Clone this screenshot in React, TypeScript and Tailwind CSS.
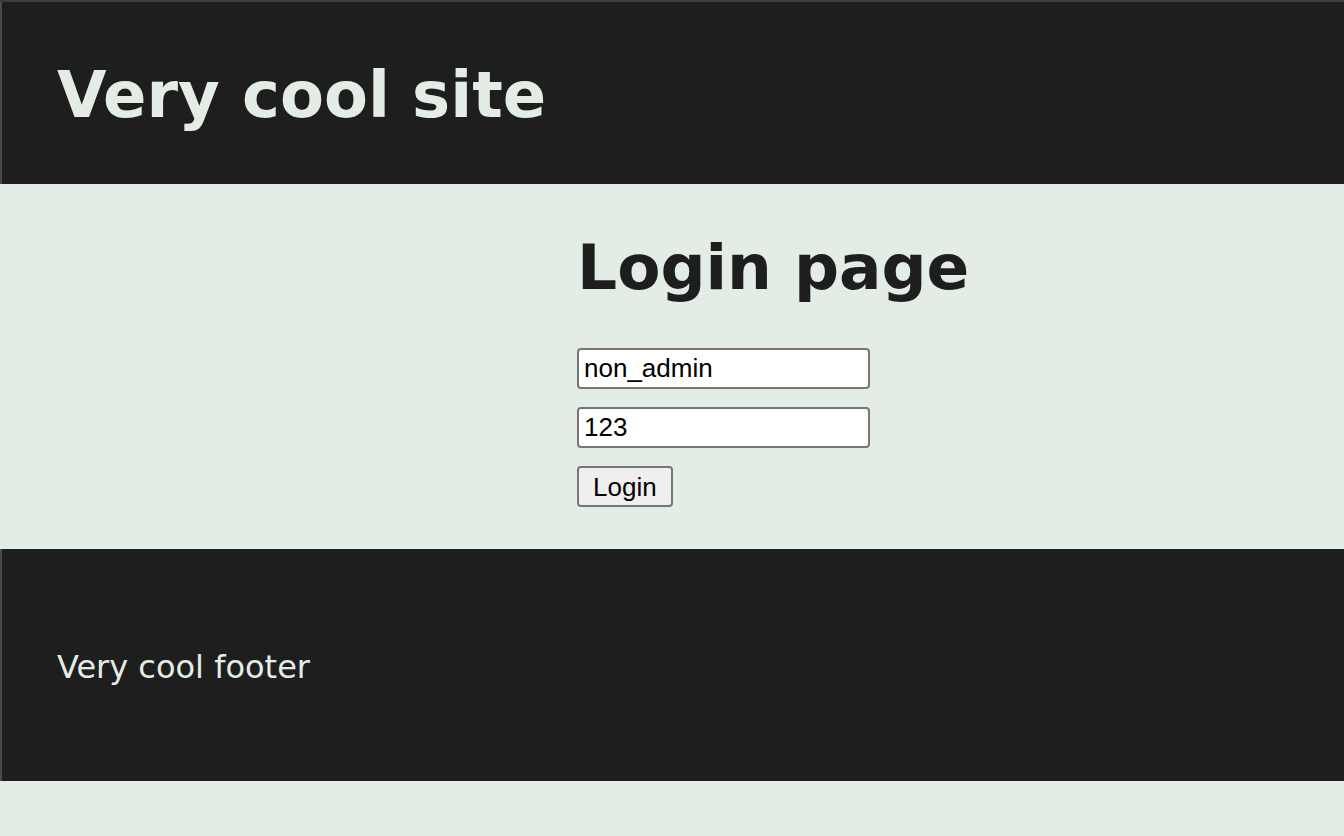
import React from "react";

export default function App() {
  return (
    <div className="min-h-[836px] bg-[#e3ece5] border-t-2 border-[#3c3c44]" style={{ fontFamily: '"DejaVu Sans", Verdana, sans-serif' }}>
      <header className="h-[182px] bg-[#1e1e1e] border-l-2 border-[#4a4a4a] flex items-center pl-[55px] pt-[3px]">
        <h1 className="text-[64px] font-bold text-[#e3ece5] leading-none">Very cool site</h1>
      </header>
      <main className="h-[365px] pl-[577px] pt-[52px]">
        <h2 className="text-[63px] font-bold text-[#1e1e1e] leading-none">Login page</h2>
        <form className="mt-[49px] flex flex-col items-start gap-[18px]" style={{ fontFamily: '"Liberation Sans", Arial, sans-serif' }}>
          <input
            type="text"
            defaultValue="non_admin"
            className="w-[293px] h-[41px] bg-white border-2 border-[#767676] rounded-[4px] px-[5px] text-[26px] text-black outline-none"
          />
          <input
            type="text"
            defaultValue="123"
            className="w-[293px] h-[41px] bg-white border-2 border-[#767676] rounded-[4px] px-[5px] text-[26px] text-black outline-none"
          />
          <button
            type="button"
            className="h-[41px] px-[14px] bg-[#efefef] border-2 border-[#767676] rounded-[4px] text-[26px] text-black leading-none"
          >
            Login
          </button>
        </form>
      </main>
      <footer className="h-[232px] bg-[#1e1e1e] border-l-2 border-[#4a4a4a] flex items-center pl-[55px] pt-[3px]">
        <p className="text-[32px] text-[#e3ece5] leading-none">Very cool footer</p>
      </footer>
    </div>
  );
}
